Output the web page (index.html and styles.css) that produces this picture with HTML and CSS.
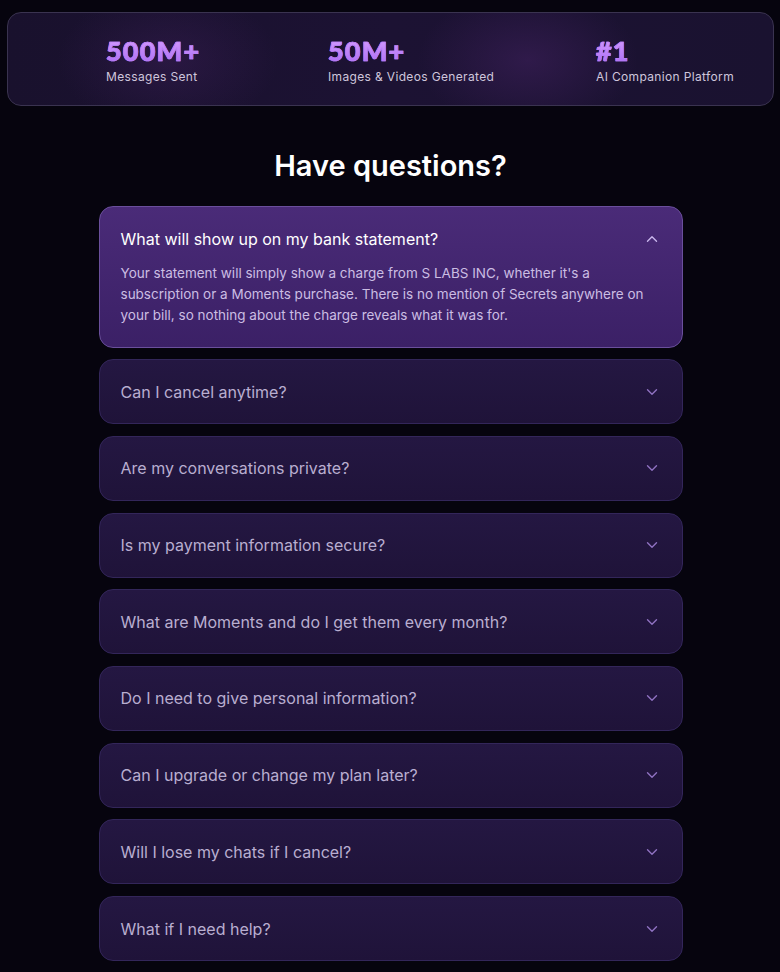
FILE: index.html
```html
<!DOCTYPE html>
<html lang="en">
<head>
<meta charset="utf-8">
<title>Have questions?</title>
<link rel="stylesheet" href="styles.css">
</head>
<body>
<section class="stats">
  <div class="stat">
    <div class="stat-num">500M+</div>
    <div class="stat-label">Messages Sent</div>
  </div>
  <div class="stat">
    <div class="stat-num">50M+</div>
    <div class="stat-label">Images &amp; Videos Generated</div>
  </div>
  <div class="stat">
    <div class="stat-num">#1</div>
    <div class="stat-label">AI Companion Platform</div>
  </div>
</section>

<h2 class="faq-title">Have questions?</h2>

<div class="faq">
  <div class="item open">
    <div class="q"><span>What will show up on my bank statement?</span>
      <svg class="chev" viewBox="0 0 16 16"><path d="M3.5 10.3 L8 5.8 L12.5 10.3"/></svg></div>
    <p class="a">Your statement will simply show a charge from S LABS INC, whether it's a subscription or a Moments purchase. There is no mention of Secrets anywhere on your bill, so nothing about the charge reveals what it was for.</p>
  </div>
  <div class="item"><div class="q"><span>Can I cancel anytime?</span><svg class="chev" viewBox="0 0 16 16"><path d="M3.5 5.8 L8 10.3 L12.5 5.8"/></svg></div></div>
  <div class="item"><div class="q"><span>Are my conversations private?</span><svg class="chev" viewBox="0 0 16 16"><path d="M3.5 5.8 L8 10.3 L12.5 5.8"/></svg></div></div>
  <div class="item"><div class="q"><span>Is my payment information secure?</span><svg class="chev" viewBox="0 0 16 16"><path d="M3.5 5.8 L8 10.3 L12.5 5.8"/></svg></div></div>
  <div class="item"><div class="q"><span>What are Moments and do I get them every month?</span><svg class="chev" viewBox="0 0 16 16"><path d="M3.5 5.8 L8 10.3 L12.5 5.8"/></svg></div></div>
  <div class="item"><div class="q"><span>Do I need to give personal information?</span><svg class="chev" viewBox="0 0 16 16"><path d="M3.5 5.8 L8 10.3 L12.5 5.8"/></svg></div></div>
  <div class="item"><div class="q"><span>Can I upgrade or change my plan later?</span><svg class="chev" viewBox="0 0 16 16"><path d="M3.5 5.8 L8 10.3 L12.5 5.8"/></svg></div></div>
  <div class="item"><div class="q"><span>Will I lose my chats if I cancel?</span><svg class="chev" viewBox="0 0 16 16"><path d="M3.5 5.8 L8 10.3 L12.5 5.8"/></svg></div></div>
  <div class="item"><div class="q"><span>What if I need help?</span><svg class="chev" viewBox="0 0 16 16"><path d="M3.5 5.8 L8 10.3 L12.5 5.8"/></svg></div></div>
</div>
</body>
</html>
```
FILE: styles.css
```css
html, body {
  margin: 0;
  padding: 0;
  background: #06040e;
}
body {
  font-family: "Inter", "Noto Sans", sans-serif;
  color: #fff;
  padding: 12px 6px 0 7px;
}
.stats {
  height: 94px;
  border: 1px solid #3a3350;
  border-radius: 14px;
  background:
    radial-gradient(ellipse 110px 70px at 160px 47px, rgba(70,35,100,0.35), transparent),
    radial-gradient(ellipse 110px 70px at 520px 47px, rgba(72,36,104,0.45), transparent),
    linear-gradient(90deg, #19112d, #1c1233 50%, #1a1230);
  display: grid;
  grid-template-columns: 222px 268px auto;
  align-content: center;
  padding-left: 98px;
  padding-top: 2px;
  box-sizing: border-box;
}
.stat-num {
  font-family: "Lato", sans-serif;
  font-weight: 900;
  font-size: 27px;
  line-height: 30px;
  letter-spacing: 1.2px;
  background: linear-gradient(180deg, #d89fff, #a96bf4);
  -webkit-background-clip: text;
  background-clip: text;
  color: transparent;
  -webkit-text-stroke: 0.7px #bb80f8;
}
.stat-label {
  font-size: 12px;
  line-height: 16px;
  letter-spacing: 0.35px;
  color: #cfc6dc;
  margin-top: 3px;
}
.faq-title {
  margin: 42px 0 22px;
  text-align: center;
  font-size: 29px;
  line-height: 36px;
  font-weight: 600;
  color: #fff;
}
.faq {
  width: 584px;
  margin: 0 auto;
  display: flex;
  flex-direction: column;
  gap: 11.7px;
}
.item {
  border: 1px solid #33265a;
  border-radius: 14px;
  background: linear-gradient(180deg, #241742, #1f1339);
  padding: 19.5px 22px 19.5px 21px;
}
.item.open {
  border-color: #6a4f9c;
  background: linear-gradient(180deg, #4a2b78, #3b2066);
  padding-top: 20px;
  padding-bottom: 20.5px;
}
.q {
  display: flex;
  align-items: center;
  justify-content: space-between;
  font-size: 16px;
  line-height: 24px;
  color: #b9aed0;
}
.open .q { color: #fff; }
.chev {
  width: 16px;
  height: 16px;
  fill: none;
  stroke: #8f72c2;
  stroke-width: 1.4;
  stroke-linecap: round;
  stroke-linejoin: round;
}
.open .chev { stroke: #c9b6ec; }
.a {
  margin: 12px 0 0;
  font-size: 13.5px;
  line-height: 21px;
  color: #cbbde3;
  padding-right: 14px;
}
```
